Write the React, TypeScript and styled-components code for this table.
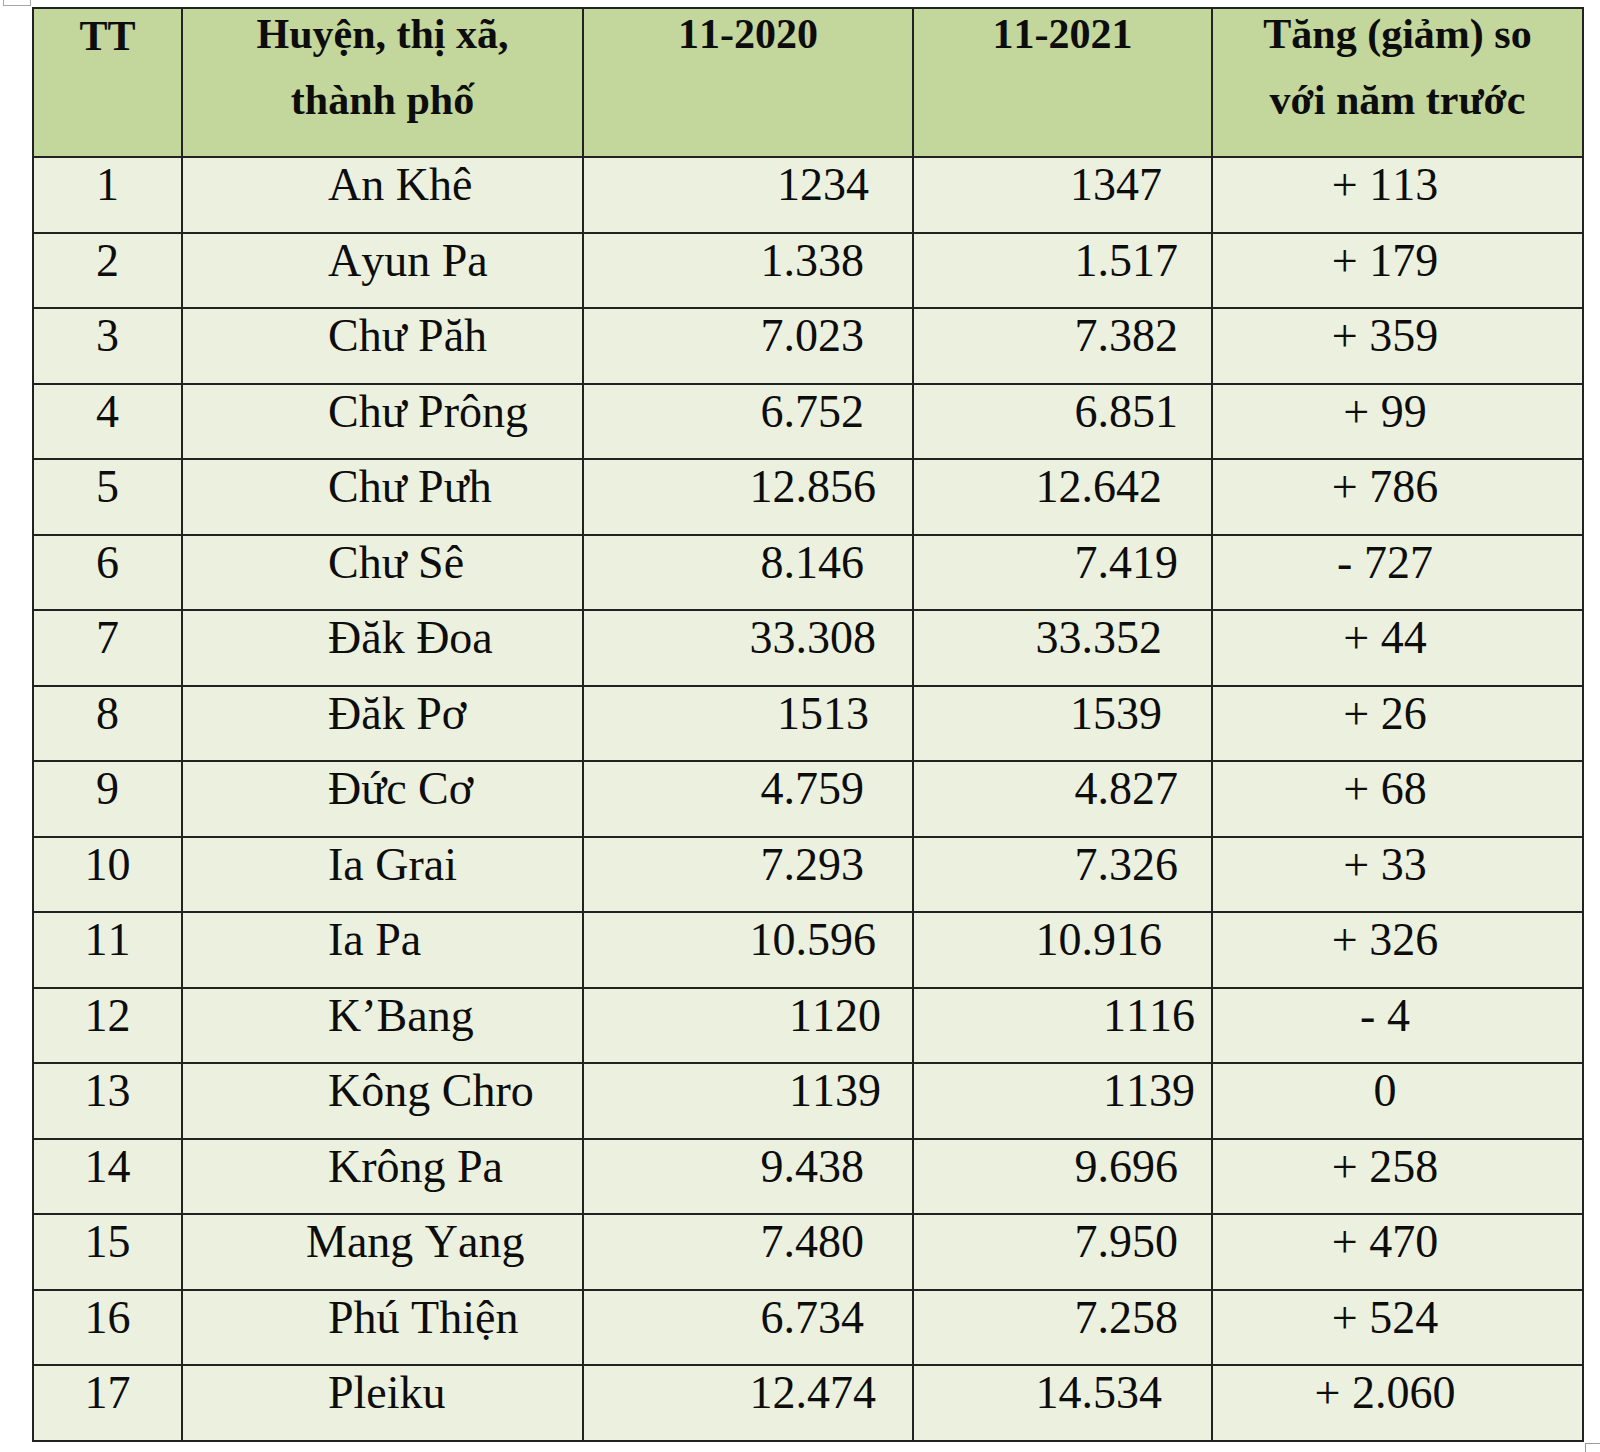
import styled, { createGlobalStyle } from 'styled-components'

const GlobalStyle = createGlobalStyle`
    html, body {
        margin: 0;
        padding: 0;
        background: #ffffff;
    }
    body {
        width: 1600px;
        height: 1452px;
        overflow: hidden;
    }
`

const Page = styled.div`
    position: relative;
    height: 1452px;
    padding: 7px 0 0 32px;
    box-sizing: border-box;
    font-family: "Liberation Serif", "Times New Roman", serif;
    font-kerning: none;
    color: #0d0d0d;
`

const Table = styled.table`
    border-collapse: collapse;
    table-layout: fixed;
    width: 1550px;
`

const HeadRow = styled.tr`
    height: 149px;
`

const BodyRow = styled.tr`
    height: 75.5px;
`

const HeadCell = styled.th`
    background: #c3d69b;
    border: 2px solid #222222;
    padding: 0;
    vertical-align: top;
    text-align: center;
    font-size: 42px;
    font-weight: 700;
    line-height: 66px;
`

const HeadText = styled.div<{ $drop?: number }>`
    margin-top: ${ p => -8 + (p.$drop ?? 0) }px;
`

const Cell = styled.td<{ $align?: 'left' | 'center' | 'right'; $padLeft?: number; $padRight?: number }>`
    background: #ebf1de;
    border: 2px solid #222222;
    padding: 0 ${ p => p.$padRight ?? 0 }px 0 ${ p => p.$padLeft ?? 0 }px;
    vertical-align: top;
    text-align: ${ p => p.$align ?? 'center' };
    font-size: 46px;
    line-height: 54px;
    white-space: nowrap;
`

// word's table move handle, mostly cut off by the top of the page
const MoveHandle = styled.div`
    position: absolute;
    left: 3px;
    top: -22px;
    width: 28px;
    height: 28px;
    box-sizing: border-box;
    border: 1px solid #a6a6a6;
    background: #ffffff;
    display: flex;
    align-items: center;
    justify-content: center;
`

const ResizeHandle = styled.div`
    position: absolute;
    left: 1585px;
    top: 1443px;
    width: 14px;
    height: 14px;
    border-top: 1px solid #9a9a9a;
    border-left: 1px solid #9a9a9a;
`

interface Row {
    tt: number;
    name: string;
    indent?: number;
    y2020: string;
    pad2020: number;
    y2021: string;
    pad2021: number;
    diff: string;
}

const rows: Row[] = [
    { tt: 1, name: 'An Khê', y2020: '1234', pad2020: 43, y2021: '1347', pad2021: 49, diff: '+ 113' },
    { tt: 2, name: 'Ayun Pa', y2020: '1.338', pad2020: 48, y2021: '1.517', pad2021: 33, diff: '+ 179' },
    { tt: 3, name: 'Chư Păh', y2020: '7.023', pad2020: 48, y2021: '7.382', pad2021: 33, diff: '+ 359' },
    { tt: 4, name: 'Chư Prông', y2020: '6.752', pad2020: 48, y2021: '6.851', pad2021: 33, diff: '+ 99' },
    { tt: 5, name: 'Chư Pưh', y2020: '12.856', pad2020: 36, y2021: '12.642', pad2021: 49, diff: '+ 786' },
    { tt: 6, name: 'Chư Sê', y2020: '8.146', pad2020: 48, y2021: '7.419', pad2021: 33, diff: '- 727' },
    { tt: 7, name: 'Đăk Đoa', y2020: '33.308', pad2020: 36, y2021: '33.352', pad2021: 49, diff: '+ 44' },
    { tt: 8, name: 'Đăk Pơ', y2020: '1513', pad2020: 43, y2021: '1539', pad2021: 49, diff: '+ 26' },
    { tt: 9, name: 'Đức Cơ', y2020: '4.759', pad2020: 48, y2021: '4.827', pad2021: 33, diff: '+ 68' },
    { tt: 10, name: 'Ia Grai', y2020: '7.293', pad2020: 48, y2021: '7.326', pad2021: 33, diff: '+ 33' },
    { tt: 11, name: 'Ia Pa', y2020: '10.596', pad2020: 36, y2021: '10.916', pad2021: 49, diff: '+ 326' },
    { tt: 12, name: 'K’Bang', y2020: '1120', pad2020: 31, y2021: '1116', pad2021: 16, diff: '- 4' },
    { tt: 13, name: 'Kông Chro', y2020: '1139', pad2020: 31, y2021: '1139', pad2021: 16, diff: '0' },
    { tt: 14, name: 'Krông Pa', y2020: '9.438', pad2020: 48, y2021: '9.696', pad2021: 33, diff: '+ 258' },
    { tt: 15, name: 'Mang Yang', indent: 123, y2020: '7.480', pad2020: 48, y2021: '7.950', pad2021: 33, diff: '+ 470' },
    { tt: 16, name: 'Phú Thiện', y2020: '6.734', pad2020: 48, y2021: '7.258', pad2021: 33, diff: '+ 524' },
    { tt: 17, name: 'Pleiku', y2020: '12.474', pad2020: 36, y2021: '14.534', pad2021: 49, diff: '+ 2.060' },
]

const colWidths = [ 149, 401, 330, 299, 371 ]

export default function App() {
    return (
        <Page>
            <GlobalStyle />
            <MoveHandle>
                <svg width="16" height="16" viewBox="0 0 16 16" fill="none" stroke="#555" strokeWidth="1">
                    <path d="M8 1v14M1 8h14M6 3l2-2 2 2M6 13l2 2 2-2M3 6L1 8l2 2M13 6l2 2-2 2" />
                </svg>
            </MoveHandle>
            <Table>
                <colgroup>
                    { colWidths.map((w, i) => <col key={ i } style={ { width: w } } />) }
                </colgroup>
                <thead>
                    <HeadRow>
                        <HeadCell><HeadText $drop={ 2 }>TT</HeadText></HeadCell>
                        <HeadCell><HeadText>Huyện, thị xã,<br />thành phố</HeadText></HeadCell>
                        <HeadCell><HeadText>11-2020</HeadText></HeadCell>
                        <HeadCell><HeadText>11-2021</HeadText></HeadCell>
                        <HeadCell><HeadText>Tăng (giảm) so<br />với năm trước</HeadText></HeadCell>
                    </HeadRow>
                </thead>
                <tbody>
                    { rows.map(row =>
                        <BodyRow key={ row.tt }>
                            <Cell>{ row.tt }</Cell>
                            <Cell $align="left" $padLeft={ row.indent ?? 145 }>{ row.name }</Cell>
                            <Cell $align="right" $padRight={ row.pad2020 }>{ row.y2020 }</Cell>
                            <Cell $align="right" $padRight={ row.pad2021 }>{ row.y2021 }</Cell>
                            <Cell $padRight={ 25 }>{ row.diff }</Cell>
                        </BodyRow>)
                    }
                </tbody>
            </Table>
            <ResizeHandle />
        </Page>
    )
}
